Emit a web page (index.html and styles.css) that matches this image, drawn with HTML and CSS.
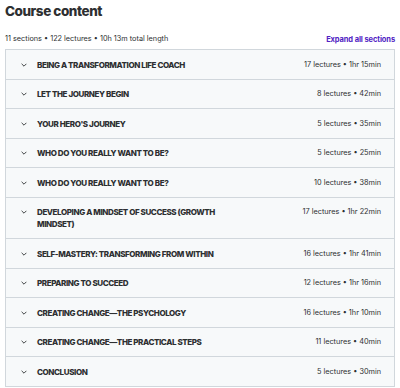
FILE: index.html
```html
<!DOCTYPE html>
<html lang="en">
<head>
    <meta charset="UTF-8">
    <meta name="viewport" content="width=device-width, initial-scale=1.0">
    <title>Course content</title>
    <link rel="stylesheet" href="styles.css">
</head>
<body>
    <div class="curriculum">
        <h2 class="curriculum-title">Course content</h2>

        <div class="curriculum-header">
            <span class="curriculum-stats">11 sections &bull; 122 lectures &bull; 10h 13m total length</span>
            <button class="expand-all">Expand all sections</button>
        </div>

        <div class="section-list">
            <div class="section">
                <span class="chevron"><svg viewBox="0 0 10 6" width="6" height="4"><path d="M1 1l4 4 4-4" fill="none" stroke="currentColor" stroke-width="1.5"/></svg></span>
                <span class="section-name">Being a Transformation Life Coach</span>
                <span class="section-meta">17 lectures &bull; 1hr 15min</span>
            </div>
            <div class="section">
                <span class="chevron"><svg viewBox="0 0 10 6" width="6" height="4"><path d="M1 1l4 4 4-4" fill="none" stroke="currentColor" stroke-width="1.5"/></svg></span>
                <span class="section-name">Let the Journey Begin</span>
                <span class="section-meta">8 lectures &bull; 42min</span>
            </div>
            <div class="section">
                <span class="chevron"><svg viewBox="0 0 10 6" width="6" height="4"><path d="M1 1l4 4 4-4" fill="none" stroke="currentColor" stroke-width="1.5"/></svg></span>
                <span class="section-name">Your Hero's Journey</span>
                <span class="section-meta">5 lectures &bull; 35min</span>
            </div>
            <div class="section">
                <span class="chevron"><svg viewBox="0 0 10 6" width="6" height="4"><path d="M1 1l4 4 4-4" fill="none" stroke="currentColor" stroke-width="1.5"/></svg></span>
                <span class="section-name">Who do you really want to be?</span>
                <span class="section-meta">5 lectures &bull; 25min</span>
            </div>
            <div class="section">
                <span class="chevron"><svg viewBox="0 0 10 6" width="6" height="4"><path d="M1 1l4 4 4-4" fill="none" stroke="currentColor" stroke-width="1.5"/></svg></span>
                <span class="section-name">Who do you really want to be?</span>
                <span class="section-meta">10 lectures &bull; 38min</span>
            </div>
            <div class="section">
                <span class="chevron"><svg viewBox="0 0 10 6" width="6" height="4"><path d="M1 1l4 4 4-4" fill="none" stroke="currentColor" stroke-width="1.5"/></svg></span>
                <span class="section-name">Developing a Mindset of Success (Growth Mindset)</span>
                <span class="section-meta">17 lectures &bull; 1hr 22min</span>
            </div>
            <div class="section">
                <span class="chevron"><svg viewBox="0 0 10 6" width="6" height="4"><path d="M1 1l4 4 4-4" fill="none" stroke="currentColor" stroke-width="1.5"/></svg></span>
                <span class="section-name">Self-Mastery: Transforming from Within</span>
                <span class="section-meta">16 lectures &bull; 1hr 41min</span>
            </div>
            <div class="section">
                <span class="chevron"><svg viewBox="0 0 10 6" width="6" height="4"><path d="M1 1l4 4 4-4" fill="none" stroke="currentColor" stroke-width="1.5"/></svg></span>
                <span class="section-name">Preparing to Succeed</span>
                <span class="section-meta">12 lectures &bull; 1hr 16min</span>
            </div>
            <div class="section">
                <span class="chevron"><svg viewBox="0 0 10 6" width="6" height="4"><path d="M1 1l4 4 4-4" fill="none" stroke="currentColor" stroke-width="1.5"/></svg></span>
                <span class="section-name">Creating Change&mdash;the Psychology</span>
                <span class="section-meta">16 lectures &bull; 1hr 10min</span>
            </div>
            <div class="section">
                <span class="chevron"><svg viewBox="0 0 10 6" width="6" height="4"><path d="M1 1l4 4 4-4" fill="none" stroke="currentColor" stroke-width="1.5"/></svg></span>
                <span class="section-name">Creating Change&mdash;the Practical Steps</span>
                <span class="section-meta">11 lectures &bull; 40min</span>
            </div>
            <div class="section">
                <span class="chevron"><svg viewBox="0 0 10 6" width="6" height="4"><path d="M1 1l4 4 4-4" fill="none" stroke="currentColor" stroke-width="1.5"/></svg></span>
                <span class="section-name">Conclusion</span>
                <span class="section-meta">5 lectures &bull; 30min</span>
            </div>
        </div>
    </div>
</body>
</html>
```

FILE: styles.css
```css
/* General Styles */
body {
    font-family: Inter, "Noto Sans", sans-serif;
    background-color: #ffffff;
    color: #2d2f31;
    margin: 0;
}

.curriculum {
    padding: 0 5px;
}

.curriculum-title {
    font-size: 13.5px;
    font-weight: 800;
    margin: 0;
    padding-top: 2px;
    line-height: 18px;
    letter-spacing: -0.45px;
}

/* Stats row + expand link */
.curriculum-header {
    display: flex;
    justify-content: space-between;
    align-items: center;
    margin-top: 14px;
    margin-bottom: 5px;
    font-size: 7.3px;
    line-height: 10px;
}

.curriculum-stats {
    color: #2d2f31;
}

.expand-all {
    background: none;
    border: none;
    padding: 0;
    font-family: inherit;
    font-size: 7.5px;
    font-weight: 700;
    letter-spacing: -0.1px;
    color: #5022c3;
    cursor: pointer;
}

/* Section list */
.section-list {
    border: 1px solid #d1d7dc;
    border-bottom: none;
}

.section {
    display: flex;
    align-items: flex-start;
    background-color: #f7f9fa;
    border-bottom: 1px solid #d1d7dc;
    padding: 8.5px 13px 8px 15px;
    line-height: 12px;
}

.chevron {
    width: 6px;
    margin-right: 10px;
    color: #2d2f31;
    display: flex;
    align-items: center;
    height: 12px;
}

.section-name {
    flex: 1;
    max-width: 212px;
    font-size: 8px;
    font-weight: 800;
    letter-spacing: -0.4px;
    text-transform: uppercase;
}

.section-meta {
    margin-left: auto;
    font-size: 7.3px;
    color: #2d2f31;
    white-space: nowrap;
}
```
